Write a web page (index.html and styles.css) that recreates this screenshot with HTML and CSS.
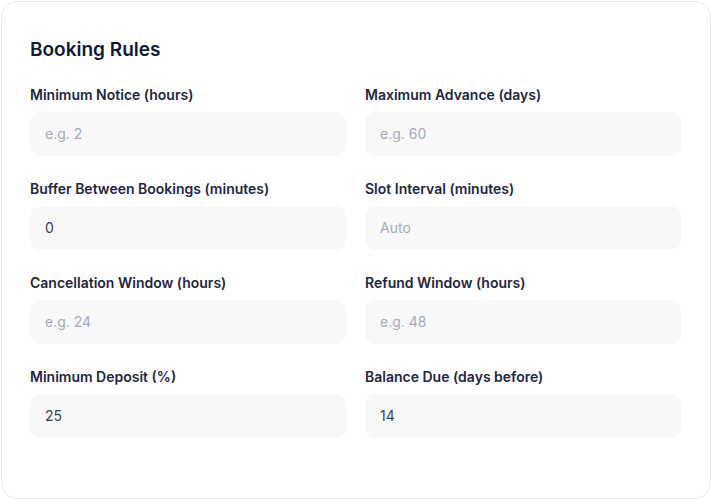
FILE: index.html
```html
<!DOCTYPE html>
<html lang="en">
<head>
	<meta charset="UTF-8">
	<title>Booking Rules</title>
	<link rel="stylesheet" href="styles.css">
</head>
<body>
	<div class="card">
		<h2 class="cardTitle">Booking Rules</h2>
		<div class="fieldGrid">
			<label class="field">
				<span class="fieldLabel">Minimum Notice (hours)</span>
				<input class="fieldInput" type="text" placeholder="e.g. 2">
			</label>
			<label class="field">
				<span class="fieldLabel">Maximum Advance (days)</span>
				<input class="fieldInput" type="text" placeholder="e.g. 60">
			</label>
			<label class="field">
				<span class="fieldLabel">Buffer Between Bookings (minutes)</span>
				<input class="fieldInput" type="text" value="0">
			</label>
			<label class="field">
				<span class="fieldLabel">Slot Interval (minutes)</span>
				<input class="fieldInput" type="text" placeholder="Auto">
			</label>
			<label class="field">
				<span class="fieldLabel">Cancellation Window (hours)</span>
				<input class="fieldInput" type="text" placeholder="e.g. 24">
			</label>
			<label class="field">
				<span class="fieldLabel">Refund Window (hours)</span>
				<input class="fieldInput" type="text" placeholder="e.g. 48">
			</label>
			<label class="field">
				<span class="fieldLabel">Minimum Deposit (%)</span>
				<input class="fieldInput" type="text" value="25">
			</label>
			<label class="field">
				<span class="fieldLabel">Balance Due (days before)</span>
				<input class="fieldInput" type="text" value="14">
			</label>
		</div>
	</div>
</body>
</html>
```

FILE: styles.css
```css
body{
	margin: 0;
	padding: 1px;
	background: #ffffff;
	font-family: Inter, "Noto Sans", sans-serif;
}
.card{
	box-sizing: border-box;
	height: 498px;
	width: 710px;
	border: 1px solid #ebebee;
	border-radius: 16px;
	background: #ffffff;
	padding: 34px 28px 0 28px;
}
.cardTitle{
	margin: 0 0 21px 0;
	font-size: 19px;
	line-height: 28px;
	font-weight: 600;
	color: #0f1a3b;
}
.fieldGrid{
	display: grid;
	grid-template-columns: 316px 316px;
	column-gap: 19px;
	row-gap: 23px;
}
.field{
	display: flex;
	flex-direction: column;
	gap: 7px;
}
.fieldLabel{
	font-size: 14px;
	line-height: 20px;
	font-weight: 600;
	color: #1e2740;
}
.fieldInput{
	box-sizing: border-box;
	height: 44px;
	width: 100%;
	border: 0;
	border-radius: 10px;
	background: #f8f8f9;
	padding: 0 15px 1px 15px;
	font-family: Inter, "Noto Sans", sans-serif;
	font-size: 14px;
	color: #3b4256;
	outline: none;
}
.fieldInput::placeholder{
	color: #a3aabb;
}
```
